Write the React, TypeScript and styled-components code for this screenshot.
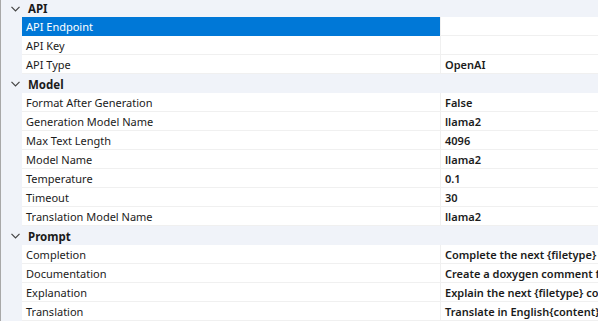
import { createGlobalStyle } from "styled-components";
import styled from "styled-components";

const Global = createGlobalStyle`
    html, body {
        margin: 0;
        padding: 0;
        background: #ffffff;
    }
    body {
        font-family: "Noto Sans", "Open Sans", sans-serif;
        font-size: 11px;
        color: #1b1b1b;
    }
`;

const Grid = styled.div`
    width: 598px;
    height: 321px;
    overflow: hidden;
    background: #f0f3f9;
    border-left: 1px solid #a8a8a8;
    box-sizing: border-box;
    display: flex;
    flex-direction: column;
`;

const Category = styled.div<{ first?: boolean }>`
    height: ${props => props.first ? 17 : 19}px;
    display: flex;
    align-items: center;
    flex-shrink: 0;
    font-weight: 700;
    font-size: 11.5px;
    padding-top: ${props => props.first ? 0 : 1}px;
    box-sizing: border-box;
    overflow: hidden;
`;

const Toggle = styled.span`
    width: 25px;
    display: flex;
    justify-content: center;
    padding-left: 2px;
`;

const Row = styled.div`
    height: 19px;
    flex-shrink: 0;
    display: grid;
    grid-template-columns: 21px 418px 1fr;
    box-sizing: border-box;
`;

const Label = styled.div<{ selected?: boolean }>`
    background: ${props => props.selected ? "#0078d7" : "#ffffff"};
    color: ${props => props.selected ? "#ffffff" : "#1b1b1b"};
    border-bottom: 1px solid ${props => props.selected ? "#0078d7" : "#f0f0f0"};
    padding-left: 4px;
    padding-top: 1px;
    line-height: 17px;
    white-space: nowrap;
    overflow: hidden;
`;

const Value = styled.div`
    background: #ffffff;
    border-left: 1px solid #f0f0f0;
    border-bottom: 1px solid #f0f0f0;
    padding-left: 4px;
    padding-top: 1px;
    line-height: 17px;
    font-weight: 600;
    white-space: nowrap;
    overflow: hidden;
`;

const Chevron = () => (
    <svg width="9" height="6" viewBox="0 0 9 6">
        <path d="M0.5 0.8 L4.5 4.8 L8.5 0.8" fill="none" stroke="#444" strokeWidth="1.2" />
    </svg>
);

const sections = [
    {
        name: "API",
        items: [
            ["API Endpoint", ""],
            ["API Key", ""],
            ["API Type", "OpenAI"],
        ],
    },
    {
        name: "Model",
        items: [
            ["Format After Generation", "False"],
            ["Generation Model Name", "llama2"],
            ["Max Text Length", "4096"],
            ["Model Name", "llama2"],
            ["Temperature", "0.1"],
            ["Timeout", "30"],
            ["Translation Model Name", "llama2"],
        ],
    },
    {
        name: "Prompt",
        items: [
            ["Completion", "Complete the next {filetype} code"],
            ["Documentation", "Create a doxygen comment for the following"],
            ["Explanation", "Explain the next {filetype} code"],
            ["Translation", "Translate in English{content}"],
        ],
    },
];

function App() {
    return (
        <>
            <Global />
            <Grid>
                {sections.map((s, si) => (
                    <div key={s.name} style={{ display: "contents" }}>
                        <Category first={si === 0}>
                            <Toggle><Chevron /></Toggle>
                            {s.name}
                        </Category>
                        {s.items.map(([label, value]) => (
                            <Row key={label}>
                                <span />
                                <Label selected={label === "API Endpoint"}>{label}</Label>
                                <Value>{value}</Value>
                            </Row>
                        ))}
                    </div>
                ))}
            </Grid>
        </>
    );
}

export default App;
